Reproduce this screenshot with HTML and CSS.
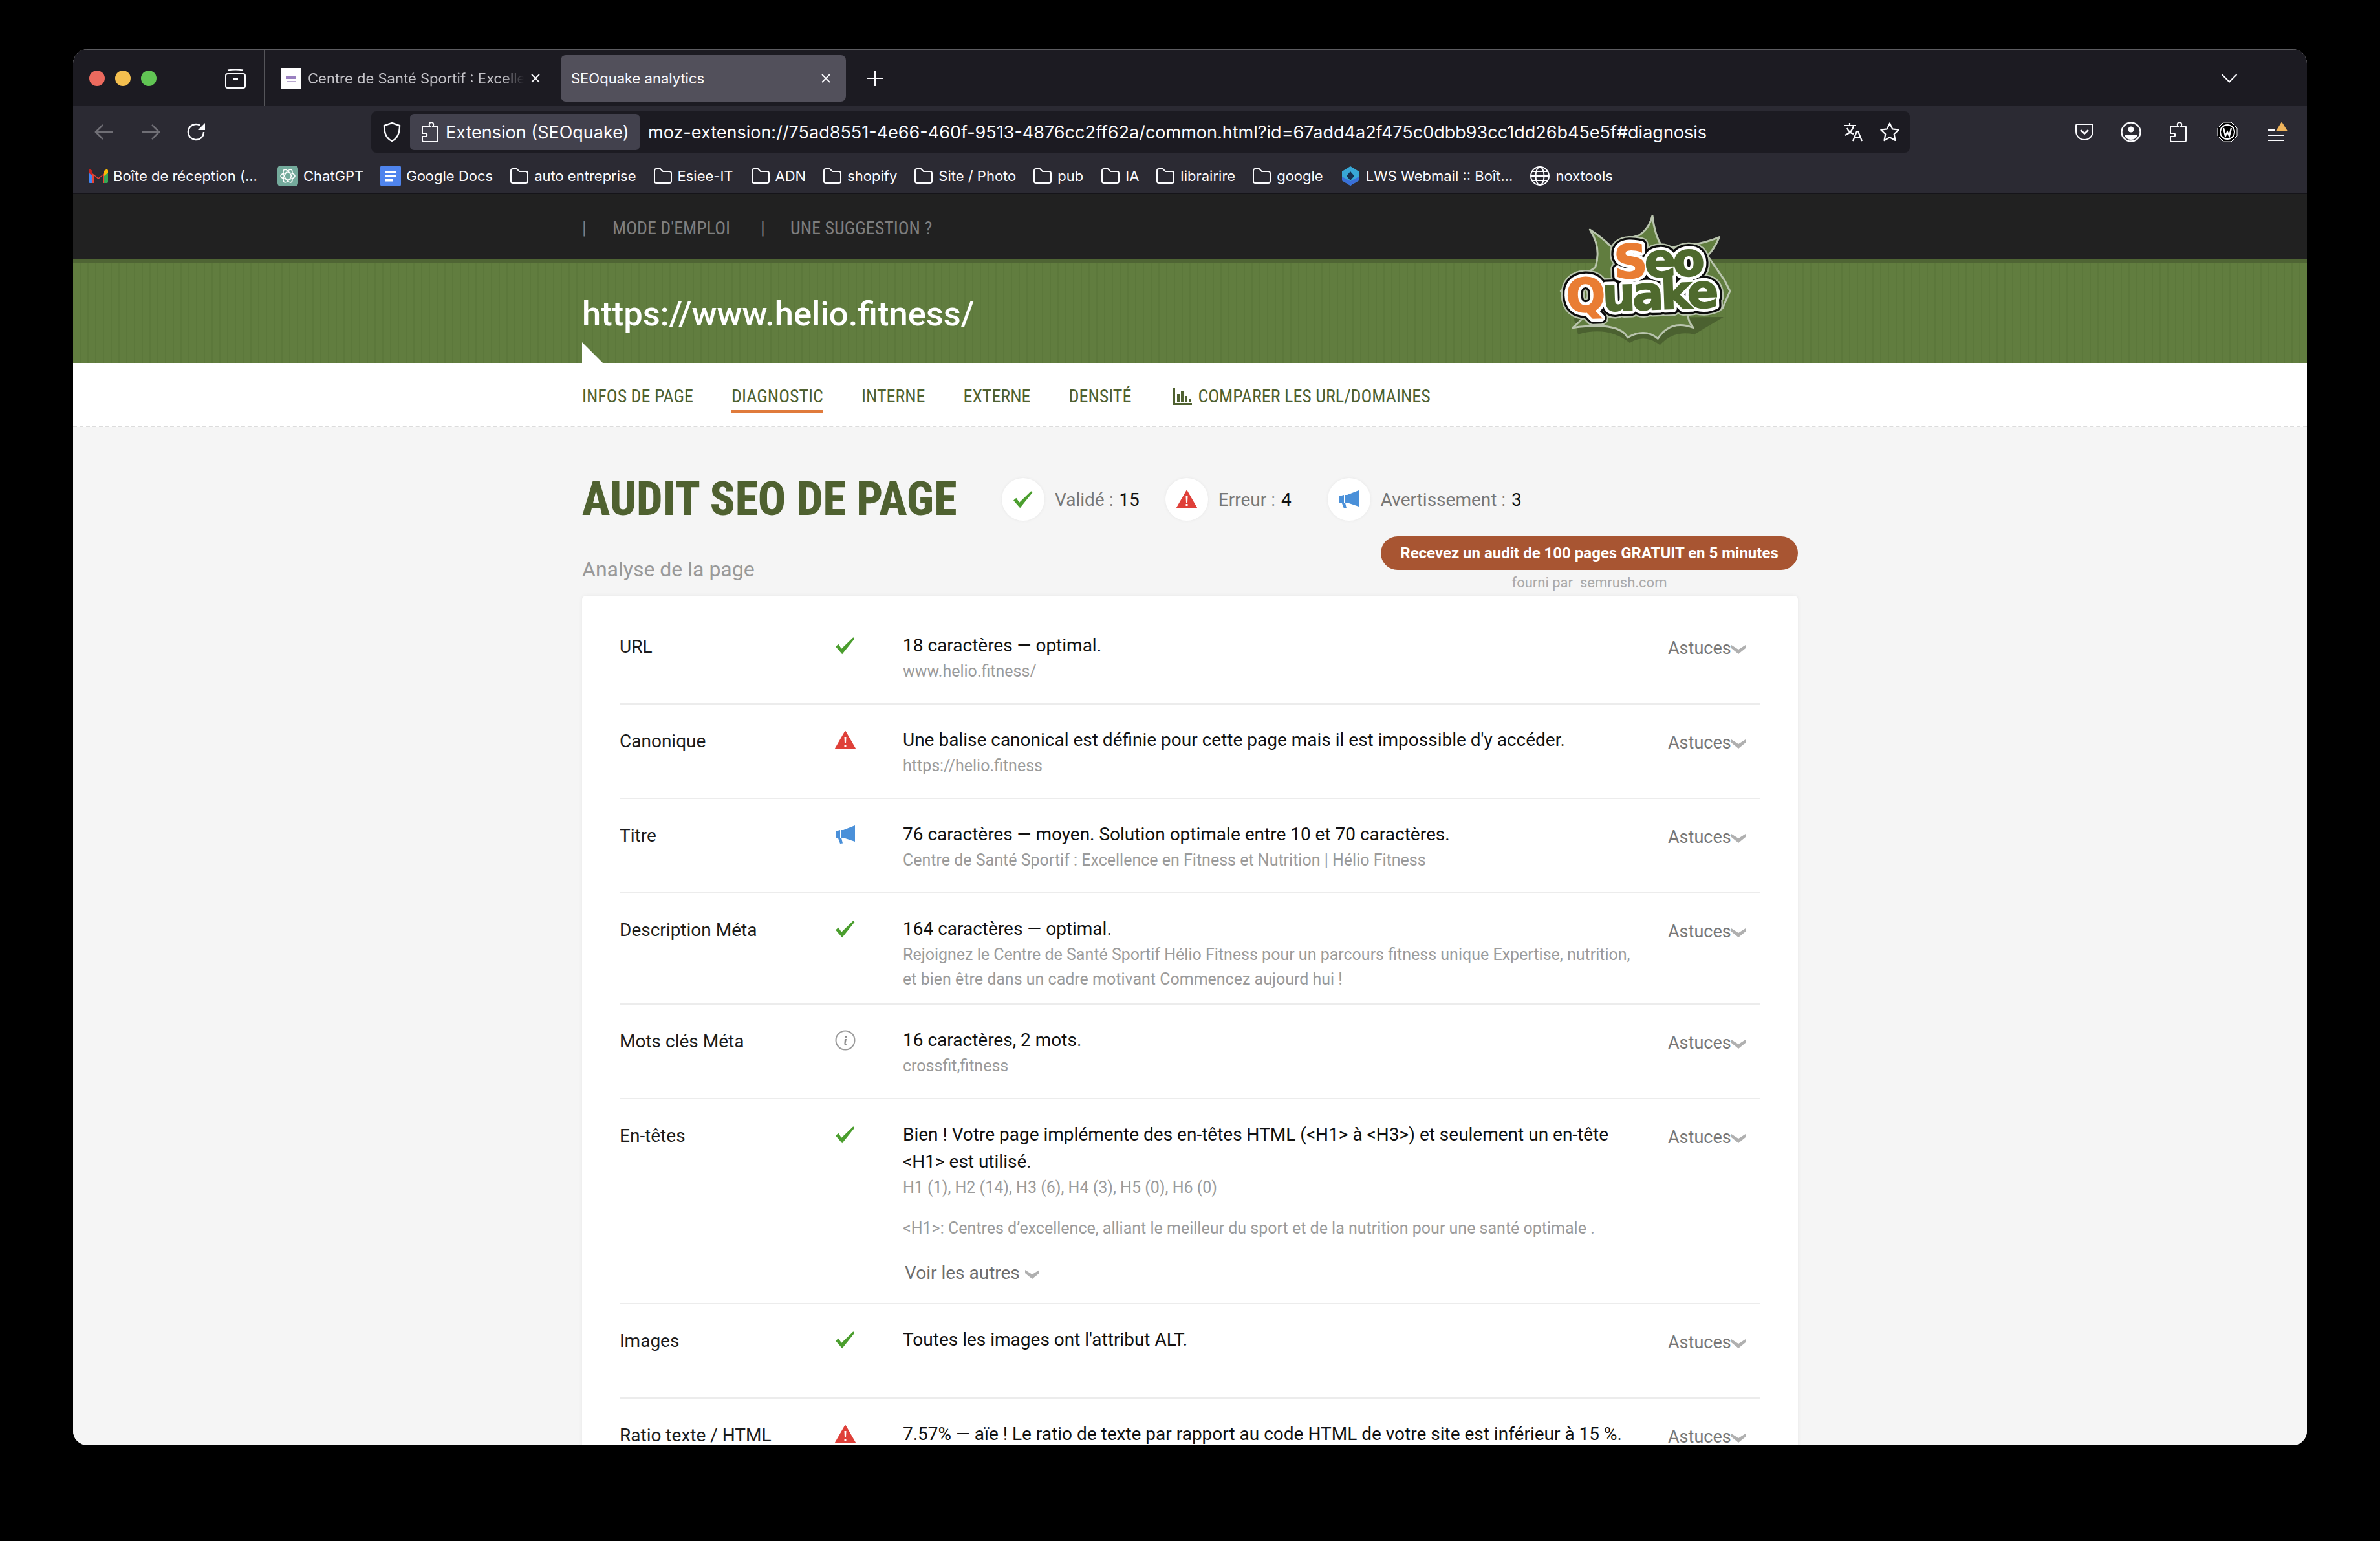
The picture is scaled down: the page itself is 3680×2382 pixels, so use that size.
FILE: index.html
```html
<!DOCTYPE html>
<html lang="fr">
<head>
<meta charset="utf-8">
<title>SEOquake analytics</title>
<link rel="stylesheet" href="styles.css">
</head>
<body>
<div class="window">
  <svg width="0" height="0" class="defs">
    <defs>
      <symbol id="folder" viewBox="0 0 30 30"><path d="M2 7a3 3 0 0 1 3-3h6l4 4h10a3 3 0 0 1 3 3v12a3 3 0 0 1-3 3H5a3 3 0 0 1-3-3z" fill="none" stroke="#fbfbfe" stroke-width="2"/></symbol>
      <symbol id="check" viewBox="0 0 30 26"><path d="M1 14.500l4-3.500 4.500 6.500L26.500 1 28.500 3 10.500 25.500z" fill="#4b9e2e"/></symbol>
      <symbol id="warn" viewBox="0 0 32 28"><path d="M16 1L31 27H1z" fill="#df4039" stroke="#df4039" stroke-width="2" stroke-linejoin="round"/><path d="M14.500 9h3l-.5 10h-2zM14.500 21h3v3h-3z" fill="#fff"/></symbol>
      <symbol id="horn" viewBox="0 0 32 28"><path d="M31 0v25L13 19l-3 0V7l3 0z" fill="#4a90d9"/><path d="M1 9l7-2v12l-4 1-3-1z" fill="#4a90d9"/><path d="M5 20l5-.5 2 8-4 .5z" fill="#4a90d9"/></symbol>
      <symbol id="info" viewBox="0 0 32 32"><circle cx="16" cy="16" r="14.500" fill="none" stroke="#9a9a9a" stroke-width="2"/><path d="M15 14h3l-1.500 7c-.2 1 .5 1.200 1.500.5l.4.8c-1.800 1.500-4.300 1.300-4-1.300z" fill="#8a8a8a"/><circle cx="17" cy="10.500" r="1.500" fill="#8a8a8a"/></symbol>
      <symbol id="chev" viewBox="0 0 22 14"><path d="M0 0l11 7 11-7v5L11 14 0 5z" fill="#b0b0b0"/></symbol>
      <symbol id="puzzle" viewBox="0 0 26 32"><path d="M9 7h3.500c-1.500-2-1-6 2.500-6s4 4 2.500 6H24a1 1 0 0 1 1 1v21a2 2 0 0 1-2 2H3a2 2 0 0 1-2-2v-6h5c3 0 3-5 0-5H1V9a2 2 0 0 1 2-2z" fill="none" stroke="#fbfbfe" stroke-width="2"/></symbol>
      <symbol id="xmark" viewBox="0 0 16 16"><path d="M2 2l12 12M14 2L2 14" fill="none" stroke="#fbfbfe" stroke-width="1.800"/></symbol>
    </defs>
  </svg>

  <div class="tabbar">
    <div class="lights"><i class="light red"></i><i class="light yellow"></i><i class="light green"></i></div>
    <svg class="fxview" viewBox="0 0 32 32"><path d="M4 3.500q12-2 24 0" fill="none" stroke="#fbfbfe" stroke-width="2"/><rect x="1" y="9" width="30" height="22" rx="3" fill="none" stroke="#fbfbfe" stroke-width="2"/><path d="M12 17h8" stroke="#fbfbfe" stroke-width="2.500"/></svg>
    <div class="tab">
      <span class="favicon"><svg viewBox="0 0 32 32"><path d="M8 12h16v5H8z" fill="#9a80c0"/><path d="M9 20h14v1.500H9z" fill="#b9a8d0"/></svg></span>
      <span class="tab-title fade">Centre de Santé Sportif : Excellence</span>
      <svg class="tab-x"><use href="#xmark"/></svg>
    </div>
    <div class="tab active">
      <span class="tab-title">SEOquake analytics</span>
      <svg class="tab-x"><use href="#xmark"/></svg>
    </div>
    <svg class="plus" viewBox="0 0 26 26"><path d="M13 1v24M1 13h24" stroke="#fbfbfe" stroke-width="2"/></svg>
    <svg class="tabs-chev" viewBox="0 0 26 16"><path d="M1.500 2L13 13.500 24.500 2" fill="none" stroke="#fbfbfe" stroke-width="2"/></svg>
  </div>

  <div class="navbar">
    <svg class="nav-ico" viewBox="0 0 30 26"><path d="M29 13H2M13 2L2 13l11 11" fill="none" stroke="#6f6e75" stroke-width="2.500"/></svg>
    <svg class="nav-ico" viewBox="0 0 30 26"><path d="M1 13h27M17 2l11 11-11 11" fill="none" stroke="#6f6e75" stroke-width="2.500"/></svg>
    <svg class="nav-ico reload" viewBox="0 0 30 30"><path d="M26 15A12 12 0 1 1 20 4.600" fill="none" stroke="#fbfbfe" stroke-width="2.500"/><path d="M28 1v11H17z" fill="#fbfbfe"/></svg>
    <div class="urlbar">
      <svg class="shield" viewBox="0 0 28 32"><path d="M14 2l12 4c0 12-3 20-12 24C5 26 2 18 2 6z" fill="none" stroke="#fbfbfe" stroke-width="2.400"/></svg>
      <div class="identity"><svg class="id-puzzle"><use href="#puzzle"/></svg><span>Extension (SEOquake)</span></div>
      <span class="url">moz-extension://75ad8551-4e66-460f-9513-4876cc2ff62a/common.html?id=67add4a2f475c0dbb93cc1dd26b45e5f#diagnosis</span>
      <svg class="ub-ico" viewBox="0 0 32 32"><path d="M1 6h19M10 2v4M16 6c-1 7-6 12-13 15M6 10c2 5 6 8 10 9" fill="none" stroke="#fbfbfe" stroke-width="2.200"/><path d="M15 30l6-15h2l6 15M17.500 25h9" fill="none" stroke="#fbfbfe" stroke-width="2.200"/></svg>
      <svg class="ub-ico star" viewBox="0 0 32 32"><path d="M16 2.500l4.200 8.900 9.500 1.300-7 6.600 1.800 9.700-8.500-4.700L7.500 29l1.800-9.700-7-6.600 9.500-1.300z" fill="none" stroke="#fbfbfe" stroke-width="2.200" stroke-linejoin="round"/></svg>
    </div>
    <div class="tools">
      <svg class="tool pocket" viewBox="0 0 28 26"><path d="M3 1h22a2 2 0 0 1 2 2v9a13 13 0 0 1-26 0V3a2 2 0 0 1 2-2z" fill="none" stroke="#fbfbfe" stroke-width="2"/><path d="M8 10l6 5.500 6-5.500" fill="none" stroke="#fbfbfe" stroke-width="2.400"/></svg>
      <svg class="tool acct" viewBox="0 0 32 32"><circle cx="16" cy="16" r="14.500" fill="none" stroke="#fbfbfe" stroke-width="2.400"/><circle cx="16" cy="12" r="4.500" fill="#fbfbfe"/><path d="M6 20h20a10 8 0 0 1-20 0z" fill="#fbfbfe"/></svg>
      <svg class="tool puz"><use href="#puzzle"/></svg>
      <svg class="tool wmark" viewBox="0 0 32 32"><path d="M10 1h12l9 9v12l-9 9H10l-9-9V10z" fill="#000" stroke="#fbfbfe" stroke-width="1"/><circle cx="16" cy="16" r="11" fill="none" stroke="#fbfbfe" stroke-width="2"/><path d="M10 10l3 12 3-6 3 6 3-12" fill="none" stroke="#fbfbfe" stroke-width="2.400"/></svg>
      <svg class="tool menu" viewBox="0 0 32 30"><path d="M2 12h10M2 20h24M2 28h24" stroke="#fbfbfe" stroke-width="2"/><path d="M23 1l7.500 12H15.500z" fill="#eeb35b" stroke="#eeb35b" stroke-linejoin="round" stroke-width="2"/></svg>
    </div>
  </div>

  <div class="bookmarks">
    <a class="bm gmail-bm"><svg class="bm-ico gmail" viewBox="0 0 30 22"><path d="M2 22V4l13 10L28 4v18h-6V10l-7 6-7-6v12z" fill="#ea4335"/><path d="M0 3v17a2 2 0 0 0 2 2h4V9z" fill="#4285f4"/><path d="M30 3v17a2 2 0 0 1-2 2h-4V9z" fill="#34a853"/><path d="M24 3l3-2c1-.5 3 0 3 2v3l-6 5z" fill="#fbbc04"/><path d="M6 3L3 1C2 .5 0 1 0 3v3l6 5z" fill="#c5221f"/></svg>Boîte de réception (...</a>
    <a class="bm gpt-bm"><svg class="bm-ico square" viewBox="0 0 32 32"><rect width="32" height="32" rx="5" fill="#74aa9c"/><g fill="none" stroke="#fff" stroke-width="1.500"><ellipse cx="16" cy="16" rx="11" ry="5"/><ellipse cx="16" cy="16" rx="11" ry="5" transform="rotate(60 16 16)"/><ellipse cx="16" cy="16" rx="11" ry="5" transform="rotate(120 16 16)"/></g></svg>ChatGPT</a>
    <a class="bm docs-bm"><svg class="bm-ico square" viewBox="0 0 32 32"><rect width="32" height="32" rx="3" fill="#4f84ed"/><path d="M7 8h18v3.500H7zM7 14.500h18V18H7zM7 21h12v3.500H7z" fill="#fff"/></svg>Google Docs</a>
    <a class="bm b-auto"><svg class="bm-ico fold"><use href="#folder"/></svg>auto entreprise</a>
    <a class="bm b-esiee"><svg class="bm-ico fold"><use href="#folder"/></svg>Esiee-IT</a>
    <a class="bm b-adn"><svg class="bm-ico fold"><use href="#folder"/></svg>ADN</a>
    <a class="bm b-shop"><svg class="bm-ico fold"><use href="#folder"/></svg>shopify</a>
    <a class="bm b-site"><svg class="bm-ico fold"><use href="#folder"/></svg>Site / Photo</a>
    <a class="bm b-pub"><svg class="bm-ico fold"><use href="#folder"/></svg>pub</a>
    <a class="bm b-ia"><svg class="bm-ico fold"><use href="#folder"/></svg>IA</a>
    <a class="bm b-lib"><svg class="bm-ico fold"><use href="#folder"/></svg>librairire</a>
    <a class="bm b-goo"><svg class="bm-ico fold"><use href="#folder"/></svg>google</a>
    <a class="bm b-lws"><svg class="bm-ico square" viewBox="0 0 32 32"><path d="M16 1l13 8v14l-13 8-13-8V9z" fill="#38a7d6"/><path d="M3 23l13 8 13-8V17L16 24 3 17z" fill="#3a6fd8"/><path d="M16 9l6 7-6 7-6-7z" fill="#17304f"/></svg>LWS Webmail :: Boît...</a>
    <a class="bm b-nox"><svg class="bm-ico square" viewBox="0 0 32 32"><g fill="none" stroke="#fbfbfe" stroke-width="2"><circle cx="16" cy="16" r="14"/><ellipse cx="16" cy="16" rx="6.500" ry="14"/><path d="M2 16h28M4 9h24M4 23h24"/></g></svg>noxtools</a>
  </div>

  <div class="page">
    <header class="darkhead">
      <div class="wrap topline">
        <span class="pipe">|</span><a class="toplink">MODE D'EMPLOI</a>
        <span class="pipe second">|</span><a class="toplink">UNE SUGGESTION ?</a>
        <svg class="logo" viewBox="0 0 1500 720">
          <path class="burst-shadow" d="M420 650Q560 610 660 690Q730 645 800 700Q860 630 960 650L1095 570L400 575z"/>
          <path class="burst" d="M475 165Q530 200 575 245Q650 205 705 190Q750 160 765 100Q775 190 810 245Q950 250 1075 200Q1050 260 1020 285L1100 400L1125 450L1090 530L930 560Q930 590 955 620Q850 580 790 670Q730 620 650 665Q610 590 395 620Q430 590 450 565L340 450L500 340Q530 250 475 165z"/>
          <g class="logo-word" transform="rotate(-2 750 400)">
            <text class="lw halo" x="590" y="385">Seo</text><text class="lw halo" x="362" y="535">Quake</text>
            <text class="lw edge" x="590" y="385">Seo</text><text class="lw edge" x="362" y="535">Quake</text>
            <text class="lw fillw" x="590" y="385">Seo</text><text class="lw fillw" x="362" y="535">Quake</text>
            <text class="lw" x="590" y="385"><tspan class="lo">S</tspan><tspan class="lg">eo</tspan></text>
            <text class="lw" x="362" y="535"><tspan class="lo">Q</tspan><tspan class="lg">uake</tspan></text>
          </g>
        </svg>
      </div>
    </header>
    <section class="greenband">
      <div class="wrap band-inner">
        <h2 class="site-url">https://www.helio.fitness/</h2>
        <i class="notch"></i>
      </div>
    </section>
    <nav class="subnav">
      <div class="wrap subnav-inner">
        <a class="sn">INFOS DE PAGE</a>
        <a class="sn on">DIAGNOSTIC</a>
        <a class="sn">INTERNE</a>
        <a class="sn">EXTERNE</a>
        <a class="sn">DENSITÉ</a>
        <a class="sn cmp"><svg class="bars" viewBox="0 0 30 26"><path d="M1 0h3v26H1zM1 23h29v3H1zM7 9h4v13H7zM13 4h4v18h-4zM19 12h4v10h-4zM25 17h4v5h-4z" fill="#4f6130"/></svg>COMPARER LES URL/DOMAINES</a>
      </div>
    </nav>
    <main class="wrap main">
      <div class="audit-head">
        <h1 class="audit-title">AUDIT SEO DE PAGE</h1>
        <div class="badge first"><span class="disc"><svg class="ic"><use href="#check"/></svg></span><span class="blabel">Validé : <b>15</b></span></div>
        <div class="badge second"><span class="disc"><svg class="ic"><use href="#warn"/></svg></span><span class="blabel">Erreur : <b>4</b></span></div>
        <div class="badge"><span class="disc"><svg class="ic"><use href="#horn"/></svg></span><span class="blabel">Avertissement : <b>3</b></span></div>
      </div>
      <div class="subhead">
        <h3 class="analyse">Analyse de la page</h3>
        <div class="cta-box">
          <a class="cta">Recevez un audit de 100 pages GRATUIT en 5 minutes</a>
          <p class="powered">fourni par&nbsp; semrush.com</p>
        </div>
      </div>
      <div class="card">
        <div class="row">
          <div class="lab">URL</div><div class="stat"><svg class="ic"><use href="#check"/></svg></div>
          <div class="val"><p class="m">18 caractères — optimal.</p><p class="s">www.helio.fitness/</p></div>
          <div class="tip">Astuces<svg class="chev"><use href="#chev"/></svg></div>
        </div>
        <div class="row">
          <div class="lab">Canonique</div><div class="stat"><svg class="ic"><use href="#warn"/></svg></div>
          <div class="val"><p class="m">Une balise canonical est définie pour cette page mais il est impossible d'y accéder.</p><p class="s">https://helio.fitness</p></div>
          <div class="tip">Astuces<svg class="chev"><use href="#chev"/></svg></div>
        </div>
        <div class="row">
          <div class="lab">Titre</div><div class="stat"><svg class="ic"><use href="#horn"/></svg></div>
          <div class="val"><p class="m">76 caractères — moyen. Solution optimale entre 10 et 70 caractères.</p><p class="s">Centre de Santé Sportif : Excellence en Fitness et Nutrition | Hélio Fitness</p></div>
          <div class="tip">Astuces<svg class="chev"><use href="#chev"/></svg></div>
        </div>
        <div class="row">
          <div class="lab">Description Méta</div><div class="stat"><svg class="ic"><use href="#check"/></svg></div>
          <div class="val"><p class="m">164 caractères — optimal.</p><p class="s">Rejoignez le Centre de Santé Sportif Hélio Fitness pour un parcours fitness unique Expertise, nutrition, et bien être dans un cadre motivant Commencez aujourd hui !</p></div>
          <div class="tip">Astuces<svg class="chev"><use href="#chev"/></svg></div>
        </div>
        <div class="row">
          <div class="lab">Mots clés Méta</div><div class="stat"><svg class="ic ic-info"><use href="#info"/></svg></div>
          <div class="val"><p class="m">16 caractères, 2 mots.</p><p class="s">crossfit,fitness</p></div>
          <div class="tip">Astuces<svg class="chev"><use href="#chev"/></svg></div>
        </div>
        <div class="row">
          <div class="lab">En-têtes</div><div class="stat"><svg class="ic"><use href="#check"/></svg></div>
          <div class="val"><p class="m">Bien ! Votre page implémente des en-têtes HTML (&lt;H1&gt; à &lt;H3&gt;) et seulement un en-tête &lt;H1&gt; est utilisé.</p><p class="s">H1 (1), H2 (14), H3 (6), H4 (3), H5 (0), H6 (0)</p><p class="s h1line">&lt;H1&gt;: Centres d’excellence, alliant le meilleur du sport et de la nutrition pour une santé optimale .</p><a class="more">Voir les autres<svg class="chev"><use href="#chev"/></svg></a></div>
          <div class="tip">Astuces<svg class="chev"><use href="#chev"/></svg></div>
        </div>
        <div class="row">
          <div class="lab">Images</div><div class="stat"><svg class="ic"><use href="#check"/></svg></div>
          <div class="val"><p class="m">Toutes les images ont l'attribut ALT.</p></div>
          <div class="tip">Astuces<svg class="chev"><use href="#chev"/></svg></div>
        </div>
        <div class="row">
          <div class="lab">Ratio texte / HTML</div><div class="stat"><svg class="ic"><use href="#warn"/></svg></div>
          <div class="val"><p class="m">7.57% — aïe ! Le ratio de texte par rapport au code HTML de votre site est inférieur à 15 %.</p></div>
          <div class="tip">Astuces<svg class="chev"><use href="#chev"/></svg></div>
        </div>
      </div>
    </main>
  </div>
</div>
</body>
</html>
```
FILE: styles.css
```css
* { box-sizing: border-box; }
html, body { margin: 0; height: 100%; }
body { background: #000; padding: 76px 113px 0; font-family: Roboto, "Liberation Sans", sans-serif; overflow: hidden; }
p, h1, h2, h3 { margin: 0; font-weight: 400; }
a { text-decoration: none; color: inherit; }
.defs { position: absolute; }

.window { width: 3454px; height: 2158px; border-radius: 22px; overflow: hidden; background: #f5f5f5; display: flex; flex-direction: column; position: relative; }

/* browser chrome */
.tabbar { height: 88px; flex: none; background: #1c1b22; border-top: 2px solid #5c5c60; display: flex; align-items: center; padding-left: 25px; color: #fbfbfe; font: 400 22px Inter, sans-serif; }
.lights { display: flex; gap: 16px; }
.light { width: 24px; height: 24px; border-radius: 50%; display: block; }
.red { background: #ec6a5e; } .yellow { background: #f4bf4f; } .green { background: #61c554; }
.fxview { width: 32px; height: 32px; margin-left: 106px; }
.tab { display: flex; align-items: center; width: 459px; padding-left: 24px; border-left: 2px solid #55555a; height: 88px; margin-left: 28px; }
.favicon { width: 32px; height: 32px; background: #fff; flex: none; margin-right: 10px; }
.favicon svg { width: 32px; height: 32px; display: block; }
.tab-title { white-space: nowrap; overflow: hidden; width: 334px; color: #c4c3c8; }
.fade { -webkit-mask-image: linear-gradient(90deg, #000 90%, transparent); mask-image: linear-gradient(90deg, #000 90%, transparent); }
.tab-x { width: 16px; height: 16px; margin-left: 10px; flex: none; }
.tab.active { width: 441px; height: 72px; margin-left: 0; border: 0; border-radius: 8px; background: #52505b; padding-left: 16px; }
.tab.active .tab-title { width: 376px; color: #fbfbfe; }
.plus { width: 26px; height: 26px; margin-left: 32px; }
.tabs-chev { width: 26px; height: 16px; margin-left: auto; margin-right: 107px; }

.navbar { height: 80px; flex: none; background: #2b2a33; display: flex; align-items: center; padding-left: 33px; }
.nav-ico { width: 30px; height: 26px; margin-right: 42px; }
.reload { height: 30px; margin-right: 0; margin-left: -1px; }
.urlbar { width: 2379px; height: 64px; margin-left: 255px; background: #1c1b22; border-radius: 8px; display: flex; align-items: center; padding-left: 18px; color: #fbfbfe; font: 400 27px Inter, sans-serif; }
.shield { width: 28px; height: 32px; flex: none; }
.identity { width: 355px; height: 56px; margin-left: 14px; background: #42414d; border-radius: 6px; display: flex; align-items: center; padding-left: 18px; flex: none; white-space: nowrap; }
.id-puzzle { width: 26px; height: 32px; margin-right: 11px; flex: none; }
.url { margin-left: 13px; white-space: nowrap; width: 1818px; flex: none; }
.ub-ico { width: 32px; height: 32px; flex: none; }
.star { margin-left: 24px; }
.url + .ub-ico { margin-left: 30px; }
.tools { display: flex; align-items: center; margin-left: 256px; }
.tool { height: 32px; flex: none; }
.pocket { width: 28px; height: 26px; }
.acct { width: 32px; margin-left: 42px; }
.puz { width: 26px; margin-left: 44px; }
.wmark { width: 32px; margin-left: 47px; }
.menu { width: 32px; height: 30px; margin-left: 45px; }

.bookmarks { height: 56px; flex: none; background: #2b2a33; border-bottom: 2px solid #151419; display: flex; align-items: center; padding: 2px 0 0 24px; color: #fbfbfe; font: 400 22px Inter, sans-serif; white-space: nowrap; }
.bm { display: flex; align-items: center; gap: 8px; margin-right: 26px; flex: none; }
.gmail-bm { margin-right: 31px; }
.b-esiee, .b-pub { margin-right: 27px; }
.bm-ico { flex: none; }
.gmail { width: 30px; height: 22px; }
.square { width: 32px; height: 32px; }
.fold { width: 30px; height: 30px; }

/* page */
.page { flex: 1; min-height: 0; overflow: hidden; background: #f5f5f5; }
.wrap { width: 1880px; margin: 0 auto; }
.darkhead { height: 101px; background: #212121; }
.topline { position: relative; height: 100%; display: flex; align-items: center; padding-top: 4px; color: #7e7e7e; font: 400 28px Roboto, sans-serif; font-stretch: 75%; }
.pipe { width: 47px; }
.pipe.second { margin-left: 47px; width: 46px; }
.toplink { white-space: nowrap; }
.logo { position: absolute; left: 1400px; top: 0; width: 500px; height: 240px; z-index: 2; }
.burst { fill: #617d3f; stroke: #b9c4ad; stroke-width: 9; stroke-linejoin: round; }
.burst-shadow { fill: #4b6130; }
.lw { font: 700 215px "DejaVu Sans", sans-serif; letter-spacing: -14px; stroke-width: 6px; }
.halo { stroke: #b9c4ad; stroke-width: 68px; stroke-linejoin: round; fill: #b9c4ad; }
.edge { stroke: #0c0c0c; stroke-width: 54px; stroke-linejoin: round; fill: #0c0c0c; }
.fillw { stroke: #fff; stroke-width: 34px; stroke-linejoin: round; fill: #fff; }
.lo { fill: #e97d33; stroke: #e97d33; }
.lg { fill: #4f6a2e; stroke: #4f6a2e; }

.greenband { height: 160px; border-top: 6px solid #4f6534; background: repeating-linear-gradient(90deg, #617d3f 0 10px, #5c783b 10px 12px); }
.band-inner { position: relative; height: 100%; padding-top: 42px; }
.site-url { color: #fff; font: 500 52.500px/72px Roboto, sans-serif; }
.notch { position: absolute; left: 0; bottom: 0; width: 32px; height: 32px; background: #fff; clip-path: polygon(0 0, 100% 100%, 0 100%); }

.subnav { height: 99px; background: #fff; border-bottom: 2px dashed #dcdcdc; }
.subnav-inner { display: flex; gap: 59px; padding-top: 32px; }
.sn { color: #4f6130; font: 400 28px/40px Roboto, sans-serif; font-stretch: 75%; height: 46px; white-space: nowrap; display: flex; align-items: flex-start; }
.sn.on { border-bottom: 5px solid #e07b3c; }
.cmp { margin-left: 5px; gap: 9px; align-items: center; height: 40px; }
.bars { width: 30px; height: 26px; }

.audit-head { display: flex; align-items: center; height: 68px; margin-top: 78px; }
.audit-title { font: 800 72px/68px Roboto, sans-serif; font-stretch: 75%; color: #4f6130; white-space: nowrap; width: 649px; }
.badge { display: flex; align-items: center; margin-right: 40px; font-size: 28px; color: #777; }
.badge.second { margin-right: 56px; }
.disc { width: 66px; height: 66px; border-radius: 50%; background: #fff; box-shadow: 0 0 4px #e6e6e6; display: flex; align-items: center; justify-content: center; margin-right: 16px; }
.blabel b { font-weight: 400; color: #111; margin-left: 2px; }
.ic { width: 32px; height: 28px; display: block; }
.ic-info { height: 32px; margin-top: -2px; }

.subhead { display: flex; justify-content: space-between; align-items: flex-end; height: 115px; }
.analyse { font-size: 32px; line-height: 40px; color: #999; padding-bottom: 21px; }
.cta-box { width: 645px; display: flex; flex-direction: column; align-items: center; }
.cta { width: 100%; height: 52px; border-radius: 26px; background: #a85532; color: #fff; font: 700 24px/52px Roboto, sans-serif; text-align: center; white-space: nowrap; }
.powered { font-size: 22px; line-height: 40px; color: #aaa; }

.card { background: #fff; border-radius: 6px; box-shadow: 0 0 6px rgba(0,0,0,.06); padding: 22px 58px 0; }
.row { display: flex; min-height: 146px; padding: 34px 0 18px; border-bottom: 2px solid #ececec; color: #000; }
.lab { width: 332px; flex: none; font-size: 28px; line-height: 42px; padding-top: 2px; color: #1c1c1c; }
.stat { width: 35px; flex: none; padding-top: 7px; position: relative; left: 1px; }
.val { width: 1150px; flex: none; margin-left: 71px; }
.m { font-size: 28px; line-height: 42px; color: #111; }
.s { font-size: 25px; line-height: 38px; color: #9b9b9b; }
.h1line { margin-top: 25px; }
.more { display: flex; align-items: center; gap: 8px; margin-top: 31px; margin-bottom: 9px; padding-left: 3px; font-size: 28px; line-height: 38px; color: #6e6e6e; }
.tip { margin-left: 33px; font-size: 27px; line-height: 42px; padding-top: 4px; color: #777; display: flex; align-items: center; height: 46px; white-space: nowrap; }
.chev { width: 22px; height: 14px; flex: none; margin-top: 4px; }
```
